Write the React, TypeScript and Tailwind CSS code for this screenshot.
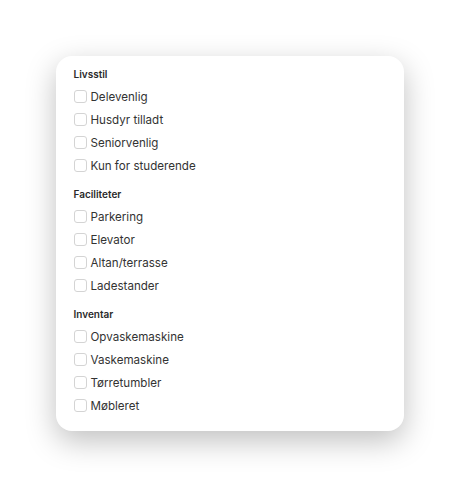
const sections = [
  {
    title: "Livsstil",
    items: ["Delevenlig", "Husdyr tilladt", "Seniorvenlig", "Kun for studerende"],
  },
  {
    title: "Faciliteter",
    items: ["Parkering", "Elevator", "Altan/terrasse", "Ladestander"],
  },
  {
    title: "Inventar",
    items: ["Opvaskemaskine", "Vaskemaskine", "Tørretumbler", "Møbleret"],
  },
];

export default function App() {
  return (
    <div className="min-h-screen w-full bg-white flex items-center justify-center font-['Inter','Liberation_Sans',sans-serif]">
      <div className="w-[348px] h-[375px] bg-white rounded-2xl shadow-[0_10px_30px_rgba(0,0,0,0.25)] px-[18px] pt-[8px]">
        {sections.map((s, i) => (
          <div key={s.title} className={i > 0 ? "mt-[7px]" : ""}>
            <div className="h-[21px] flex items-center text-[10px] leading-[12px] font-semibold text-[#2a2a2a]">
              {s.title}
            </div>
            {s.items.map((item) => (
              <label key={item} className="h-[23px] flex items-center gap-[4px] text-[11.6px] text-[#333]">
                <input type="checkbox" className="sr-only" />
                <span className="w-[13px] h-[13px] rounded-[3px] border border-[#d4d4d4] bg-white shrink-0" />
                <span className="leading-[14px] pt-[1px]">{item}</span>
              </label>
            ))}
          </div>
        ))}
      </div>
    </div>
  );
}
